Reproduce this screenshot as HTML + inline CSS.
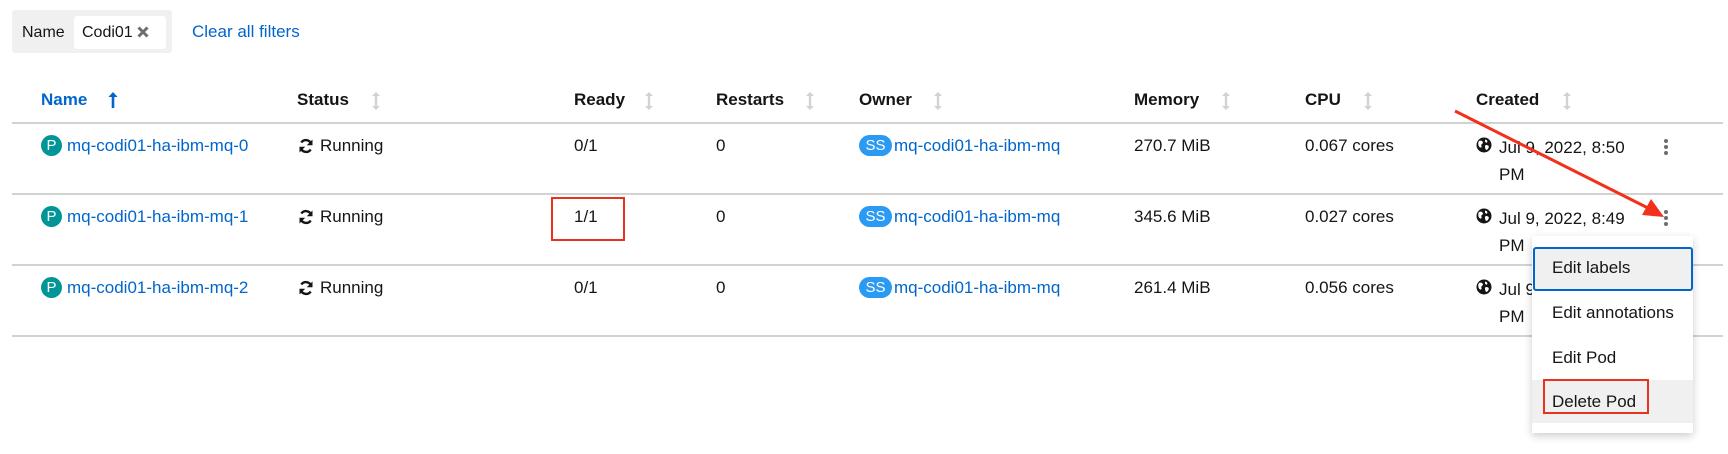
<!DOCTYPE html>
<html><head><style>
body{margin:0;width:1728px;height:454px;background:#fff;font-family:"Liberation Sans",sans-serif;font-size:17px;color:#151515;position:relative;overflow:hidden}
.a{position:absolute;white-space:nowrap}
.l{color:#0066cc}
.h{font-weight:bold}
.line{position:absolute;left:12px;width:1711px;height:2px;background:#d2d2d2}
.p{position:absolute;width:21px;height:21px;border-radius:50%;background:#009596;color:#fff;font-size:15px;text-align:center;line-height:21px}
.ss{position:absolute;width:33px;height:21px;border-radius:11px;background:#2b9af3;color:#fff;font-size:15px;text-align:center;line-height:21px}
.keb{position:absolute;width:4px}
.keb i{display:block;width:4px;height:4px;border-radius:50%;background:#6a6e73;margin-bottom:2px}
</style></head><body>
<svg width="0" height="0" style="position:absolute">
<defs>
<symbol id="srt" viewBox="0 0 10 20"><path d="M5 1 L9 5 H6.2 V15 H9 L5 19 L1 15 H3.8 V5 H1 Z" fill="#d2d2d2"/></symbol>
<symbol id="ref" viewBox="0 0 16 16"><path d="M13.2 6.2 A5.5 5.5 0 0 0 3.3 4.5" fill="none" stroke="#151515" stroke-width="2.4"/><path d="M14.5 1.5 V7.2 H8.8 Z" fill="#151515"/><path d="M2.8 9.8 A5.5 5.5 0 0 0 12.7 11.5" fill="none" stroke="#151515" stroke-width="2.4"/><path d="M1.5 14.5 V8.8 H7.2 Z" fill="#151515"/></symbol>
<symbol id="glb" viewBox="0 0 16 16"><circle cx="8" cy="8" r="7.5" fill="#151515"/><path d="M3 4 C5 3 7 4 7 6 C6 7 5 7 5.5 9 C6 11 4 11 3 9.5 C2 8 2 5 3 4Z M9 2.5 C11 3 12 4 11 5.5 C10 6 9 5 9 4Z M10 8 C12 8 13.5 9 12.5 11 C11.5 13 10 13.5 9.5 12 C9 10.5 8.5 8.5 10 8Z" fill="#fff"/></symbol>
</defs></svg>
<div class="a" style="left:12px;top:10px;width:160px;height:43px;background:#f0f0f0;border-radius:3px"></div>
<div class="a" style="left:22px;top:24px;font-size:16px">Name</div>
<div class="a" style="left:74px;top:16px;width:92px;height:33px;background:#fff;border-radius:3px"></div>
<div class="a" style="left:82px;top:24px;font-size:16px">Codi01</div>
<svg class="a" style="left:137px;top:26px" width="12" height="12"><path d="M1.5 1.5 L10.5 10.5 M10.5 1.5 L1.5 10.5" stroke="#6a6e73" stroke-width="3"/></svg>
<div class="a l" style="left:192px;top:22px">Clear all filters</div>

<div class="a l h" style="left:41px;top:90px">Name</div>
<svg class="a" style="left:108px;top:91px" width="10" height="18"><path d="M5 1 L9.5 6 H6.3 V17 H3.7 V6 H0.5 Z" fill="#0066cc"/></svg>
<div class="a h" style="left:297px;top:90px">Status</div><svg class="a" style="left:371px;top:91px" width="10" height="20"><use href="#srt"/></svg>
<div class="a h" style="left:574px;top:90px">Ready</div><svg class="a" style="left:644px;top:91px" width="10" height="20"><use href="#srt"/></svg>
<div class="a h" style="left:716px;top:90px">Restarts</div><svg class="a" style="left:805px;top:91px" width="10" height="20"><use href="#srt"/></svg>
<div class="a h" style="left:859px;top:90px">Owner</div><svg class="a" style="left:933px;top:91px" width="10" height="20"><use href="#srt"/></svg>
<div class="a h" style="left:1134px;top:90px">Memory</div><svg class="a" style="left:1221px;top:91px" width="10" height="20"><use href="#srt"/></svg>
<div class="a h" style="left:1305px;top:90px">CPU</div><svg class="a" style="left:1363px;top:91px" width="10" height="20"><use href="#srt"/></svg>
<div class="a h" style="left:1476px;top:90px">Created</div><svg class="a" style="left:1562px;top:91px" width="10" height="20"><use href="#srt"/></svg>

<div class="line" style="top:122px"></div>
<div class="line" style="top:193px"></div>
<div class="line" style="top:264px"></div>
<div class="line" style="top:335px"></div>

<div class="p" style="left:41px;top:135px">P</div><div class="a l" style="left:67px;top:136px">mq-codi01-ha-ibm-mq-0</div>
<svg class="a" style="left:298px;top:138px" width="16" height="16"><use href="#ref"/></svg><div class="a" style="left:320px;top:136px">Running</div>
<div class="a" style="left:574px;top:136px">0/1</div><div class="a" style="left:716px;top:136px">0</div>
<div class="ss" style="left:859px;top:135px">SS</div><div class="a l" style="left:894px;top:136px">mq-codi01-ha-ibm-mq</div>
<div class="a" style="left:1134px;top:136px">270.7 MiB</div><div class="a" style="left:1305px;top:136px">0.067 cores</div>
<svg class="a" style="left:1476px;top:137px" width="16" height="16"><use href="#glb"/></svg><div class="a" style="left:1499px;top:134px;line-height:27px">Jul 9, 2022, 8:50<br>PM</div>
<div class="keb" style="left:1664px;top:139px"><i></i><i></i><i></i></div>

<div class="p" style="left:41px;top:206px">P</div><div class="a l" style="left:67px;top:207px">mq-codi01-ha-ibm-mq-1</div>
<svg class="a" style="left:298px;top:209px" width="16" height="16"><use href="#ref"/></svg><div class="a" style="left:320px;top:207px">Running</div>
<div class="a" style="left:574px;top:207px">1/1</div><div class="a" style="left:716px;top:207px">0</div>
<div class="ss" style="left:859px;top:206px">SS</div><div class="a l" style="left:894px;top:207px">mq-codi01-ha-ibm-mq</div>
<div class="a" style="left:1134px;top:207px">345.6 MiB</div><div class="a" style="left:1305px;top:207px">0.027 cores</div>
<svg class="a" style="left:1476px;top:208px" width="16" height="16"><use href="#glb"/></svg><div class="a" style="left:1499px;top:205px;line-height:27px">Jul 9, 2022, 8:49<br>PM</div>
<div class="keb" style="left:1664px;top:210px"><i></i><i></i><i></i></div>

<div class="p" style="left:41px;top:277px">P</div><div class="a l" style="left:67px;top:278px">mq-codi01-ha-ibm-mq-2</div>
<svg class="a" style="left:298px;top:280px" width="16" height="16"><use href="#ref"/></svg><div class="a" style="left:320px;top:278px">Running</div>
<div class="a" style="left:574px;top:278px">0/1</div><div class="a" style="left:716px;top:278px">0</div>
<div class="ss" style="left:859px;top:277px">SS</div><div class="a l" style="left:894px;top:278px">mq-codi01-ha-ibm-mq</div>
<div class="a" style="left:1134px;top:278px">261.4 MiB</div><div class="a" style="left:1305px;top:278px">0.056 cores</div>
<svg class="a" style="left:1476px;top:279px" width="16" height="16"><use href="#glb"/></svg><div class="a" style="left:1499px;top:276px;line-height:27px">Jul 9, 2022, 8:49<br>PM</div>

<div class="a" style="left:551px;top:197px;width:70px;height:40px;border:2px solid #e8321e"></div>

<div class="a" style="left:1532px;top:236px;width:161px;height:197px;background:#fff;box-shadow:0 3px 8px rgba(0,0,0,.2)"></div>
<div class="a" style="left:1533px;top:247px;width:156px;height:40px;background:#f0f0f0;border:2px solid #0066cc;border-radius:3px"></div>
<div class="a" style="left:1552px;top:258px">Edit labels</div>
<div class="a" style="left:1552px;top:303px">Edit annotations</div>
<div class="a" style="left:1552px;top:348px">Edit Pod</div>
<div class="a" style="left:1532px;top:380px;width:161px;height:43px;background:#f0f0f0"></div>
<div class="a" style="left:1543px;top:379px;width:102px;height:31px;border:2px solid #e8321e"></div>
<div class="a" style="left:1552px;top:392px">Delete Pod</div>

<svg class="a" style="left:0;top:0" width="1728" height="454">
<line x1="1455" y1="111" x2="1648" y2="208" stroke="#f2311c" stroke-width="3"/>
<polygon points="1664,217 1642,215 1651,199" fill="#f2311c"/>
</svg>
</body></html>
